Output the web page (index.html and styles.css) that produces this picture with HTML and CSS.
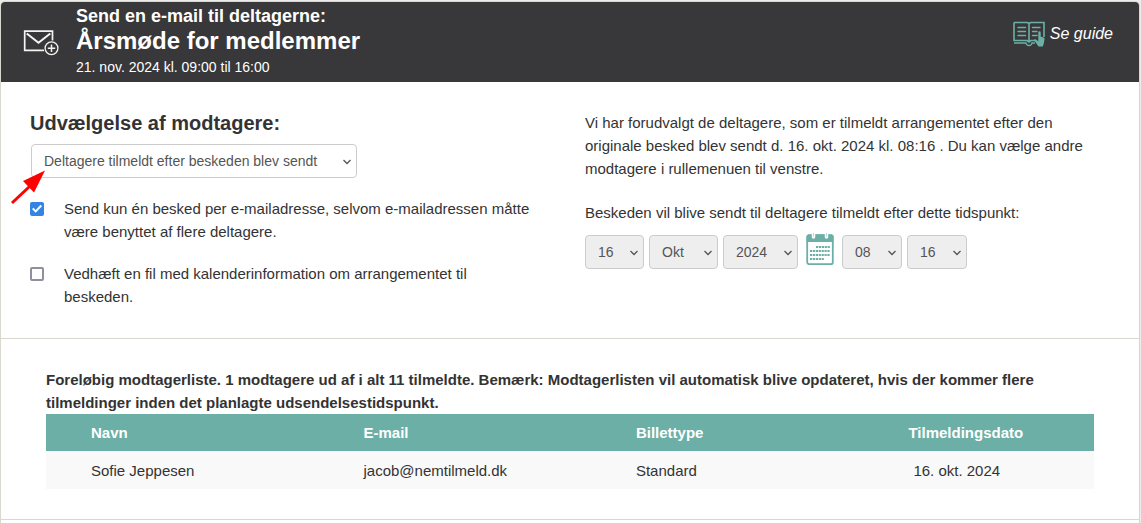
FILE: index.html
```html
<!DOCTYPE html>
<html lang="da">
<head>
<meta charset="utf-8">
<meta name="viewport" content="width=device-width, initial-scale=1">
<title>Send en e-mail til deltagerne</title>
<link rel="stylesheet" href="styles.css">
</head>
<body>
<main class="card">
  <header class="header">
    <svg class="mail-icon" width="36" height="28" viewBox="0 0 36 28" fill="none" stroke="#f4f4f1" aria-hidden="true">
      <path d="M21 22.300H1.700V3.200H29.500V12.500" stroke-width="1.700"/>
      <path d="M3.700 5.500L15.500 14.700L27.300 5.500" stroke-width="2"/>
      <circle cx="28.500" cy="20.200" r="6.400" stroke-width="1.300"/>
      <path d="M28.500 16.500v7.400M24.800 20.200h7.400" stroke-width="1.500"/>
    </svg>
    <div class="titles">
      <p class="overline">Send en e-mail til deltagerne:</p>
      <h1 class="title">Årsmøde for medlemmer</h1>
      <p class="date">21. nov. 2024 kl. 09:00 til 16:00</p>
    </div>
    <a class="guide" href="#guide">
      <svg width="32" height="26" viewBox="0 0 32 26" fill="none" stroke="#6cafa6" aria-hidden="true">
        <path d="M1 1.500H14.500L16 2.500L17.500 1.500H31V16M1 1.500V19.500H14L16 21L18 19.500H22M16 2.500V20" stroke-width="1.600"/>
        <path d="M1 22H13C13.500 25.300 18.500 25.300 19 22H22" stroke-width="1.400"/>
        <path d="M5 6.500H12.500M5 10.500H12.500M5 14.500H12.500M19.500 6.500H27M19.500 10.500H24M19.500 14.500H24" stroke-width="1.400" stroke-linecap="round"/>
        <path d="M25.300 11C26.100 9.800 27.700 10.200 27.700 11.700V15.500L30.500 16.500C31.300 16.800 31.600 17.300 31.500 18.200L30.800 22.500L29.800 25.500H25.500L21.300 19.500C20.900 18.500 21.800 17.800 22.700 18.300L25.300 20.300Z" fill="#6cafa6" stroke="none"/>
      </svg>
      <span>Se guide</span>
    </a>
  </header>

  <section class="selection">
    <div class="recipients">
      <h2 class="subtitle"><label for="recipients">Udvælgelse af modtagere:</label></h2>
      <div class="select wide">
        <select id="recipients"><option>Deltagere tilmeldt efter beskeden blev sendt</option></select>
        <svg class="chevron" viewBox="0 0 10 6"><path d="M1.500 1L5 4.500L8.500 1"/></svg>
        <svg class="pointer" width="36" height="36" viewBox="0 0 36 36" aria-hidden="true"><path d="M2 34L20 17" stroke="#f00" stroke-width="3"/><path d="M35 1.500L13 12L24 23.500Z" fill="#f00"/></svg>
      </div>
      <label class="check"><input type="checkbox" checked><span>Send kun én besked per e-mailadresse, selvom e-mailadressen måtte være benyttet af flere deltagere.</span></label>
      <label class="check"><input type="checkbox"><span>Vedhæft en fil med kalenderinformation om arrangementet til beskeden.</span></label>
    </div>
    <div class="timing">
      <p>Vi har forudvalgt de deltagere, som er tilmeldt arrangementet efter den originale besked blev sendt d. 16. okt. 2024 kl. 08:16 . Du kan vælge andre modtagere i rullemenuen til venstre.</p>
      <p>Beskeden vil blive sendt til deltagere tilmeldt efter dette tidspunkt:</p>
      <div class="when">
        <div class="select day"><select disabled aria-label="Dag"><option>16</option></select><svg class="chevron" viewBox="0 0 10 6"><path d="M1.500 1L5 4.500L8.500 1"/></svg></div>
        <div class="select month"><select disabled aria-label="Måned"><option>Okt</option></select><svg class="chevron" viewBox="0 0 10 6"><path d="M1.500 1L5 4.500L8.500 1"/></svg></div>
        <div class="select year"><select disabled aria-label="År"><option>2024</option></select><svg class="chevron" viewBox="0 0 10 6"><path d="M1.500 1L5 4.500L8.500 1"/></svg></div>
        <button class="calendar" type="button" aria-label="Vælg dato">
          <svg width="28" height="34" viewBox="0 0 28 34" aria-hidden="true">
            <rect x="1.200" y="3.200" width="25.600" height="29" rx="2" fill="#fff" stroke="#6cafa6" stroke-width="1.800"/>
            <path d="M.5 10V4.500Q.5 2.500 2.500 2.500H25.500Q27.500 2.500 27.500 4.500V10Z" fill="#6cafa6"/>
            <path d="M7.500 1.500V5M20.500 1.500V5" stroke="#fff" stroke-width="3.500" stroke-linecap="round"/>
            <path d="M7.500 1V4.500M20.500 1V4.500" stroke="#b9dad6" stroke-width="1"/>
            <path d="M10 15H24M4 19H24M4 23H24M4 27H18" stroke="#6cafa6" stroke-width="2" stroke-dasharray="2.200 .7"/>
          </svg>
        </button>
        <div class="select time"><select disabled aria-label="Time"><option>08</option></select><svg class="chevron" viewBox="0 0 10 6"><path d="M1.500 1L5 4.500L8.500 1"/></svg></div>
        <div class="select time"><select disabled aria-label="Minut"><option>16</option></select><svg class="chevron" viewBox="0 0 10 6"><path d="M1.500 1L5 4.500L8.500 1"/></svg></div>
      </div>
    </div>
  </section>

  <section class="list">
    <p class="summary">Foreløbig modtagerliste. 1 modtagere ud af i alt 11 tilmeldte. Bemærk: Modtagerlisten vil automatisk blive opdateret, hvis der kommer flere tilmeldinger inden det planlagte udsendelsestidspunkt.</p>
    <table class="table">
      <thead><tr><th>Navn</th><th>E-mail</th><th>Billettype</th><th>Tilmeldingsdato</th></tr></thead>
      <tbody><tr><td>Sofie Jeppesen</td><td>jacob@nemtilmeld.dk</td><td>Standard</td><td class="signup">16. okt. 2024</td></tr></tbody>
    </table>
  </section>
</main>
</body>
</html>
```

FILE: styles.css
```css
* { box-sizing: border-box; }
body {
  margin: 0;
  padding: 1px 1px 0 0;
  min-height: 100vh;
  display: flex;
  background: #ecede8;
  color: #333;
  font: 15px/23px "Liberation Sans", Arial, sans-serif;
}
p, h1, h2 { margin: 0; }
.card {
  flex: 1;
  background: #fff;
  border: 1px solid #dad7ce;
  border-bottom: 0;
  border-radius: 5px 5px 0 0;
}
.header {
  display: flex;
  align-items: center;
  height: 80px;
  padding: 0 26px 0 22px;
  background: #38383a;
  border-radius: 4px 4px 0 0;
  color: #fff;
}
.mail-icon { flex: none; }
.titles { flex: 1; margin-left: 17px; }
.overline { font-size: 18px; line-height: 24px; font-weight: bold; }
.title { font-size: 24px; line-height: 26px; }
.date { font-size: 14px; line-height: 26px; }
.guide {
  display: flex;
  align-items: center;
  gap: 5px;
  margin-bottom: 16px;
  color: #fff;
  font-size: 16px;
  line-height: 22px;
  font-style: italic;
  text-decoration: none;
}
.selection {
  display: grid;
  grid-template-columns: 555px 1fr;
  padding: 29px 29px 30px;
  border-bottom: 1px solid #dad7ce;
}
.subtitle { font-size: 20px; line-height: 24px; }
.select { position: relative; height: 34px; }
.select select {
  width: 100%;
  height: 100%;
  padding: 0 12px;
  appearance: none;
  border: 1px solid #ccc;
  border-radius: 4px;
  background: #fff;
  color: #555;
  font: 14px "Liberation Sans", Arial, sans-serif;
  opacity: 1;
}
.select select:disabled { background: #eee; }
.chevron {
  position: absolute;
  right: 5px;
  top: 15px;
  width: 10px;
  height: 6px;
  fill: none;
  stroke: #555;
  stroke-width: 1.3;
  pointer-events: none;
}
.wide { width: 326px; margin: 9px 0 19px 1px; }
.pointer { position: absolute; left: -21px; top: 25px; pointer-events: none; }
.check { display: flex; gap: 20px; max-width: 502px; margin-bottom: 19px; }
.check:last-child { margin-bottom: 0; }
.check input {
  appearance: none;
  flex: none;
  display: grid;
  place-items: center;
  width: 14px;
  height: 14px;
  margin: 5px 0 0;
  border: 2px solid #8f8f9d;
  border-radius: 2px;
  background: #fff;
}
.check input:checked { background: #3584e4; border-color: #3584e4; }
.check input:checked::after {
  content: "";
  width: 10px;
  height: 10px;
  background: #fff;
  clip-path: polygon(0 51%, 15% 37%, 37% 59%, 85% 8%, 100% 23%, 37% 88%);
}
.timing p { max-width: 510px; margin-bottom: 21px; }
.timing p + p { margin-bottom: 11px; }
.when { display: flex; gap: 5px; }
.day { width: 59px; }
.time { width: 60px; }
.month { width: 69px; }
.year { width: 75px; }
.calendar {
  height: 34px;
  margin: -3px 3px 0;
  padding: 0;
  border: 0;
  background: none;
}
.calendar svg { display: block; }
.list { padding: 29px 45px 30px; border-bottom: 1px solid #dad7ce; }
.summary { font-weight: bold; }
.table { width: 100%; border-collapse: collapse; table-layout: fixed; }
.table th { width: 26%; }
.table th:last-child { width: 22%; }
.table th, .table td { padding: 7px 0 7px 45px; text-align: left; }
.table th { background: #6cafa6; color: #fff; }
.table td { height: 38px; background: #f9f9f9; }
.table .signup { padding-left: 50px; }
```
